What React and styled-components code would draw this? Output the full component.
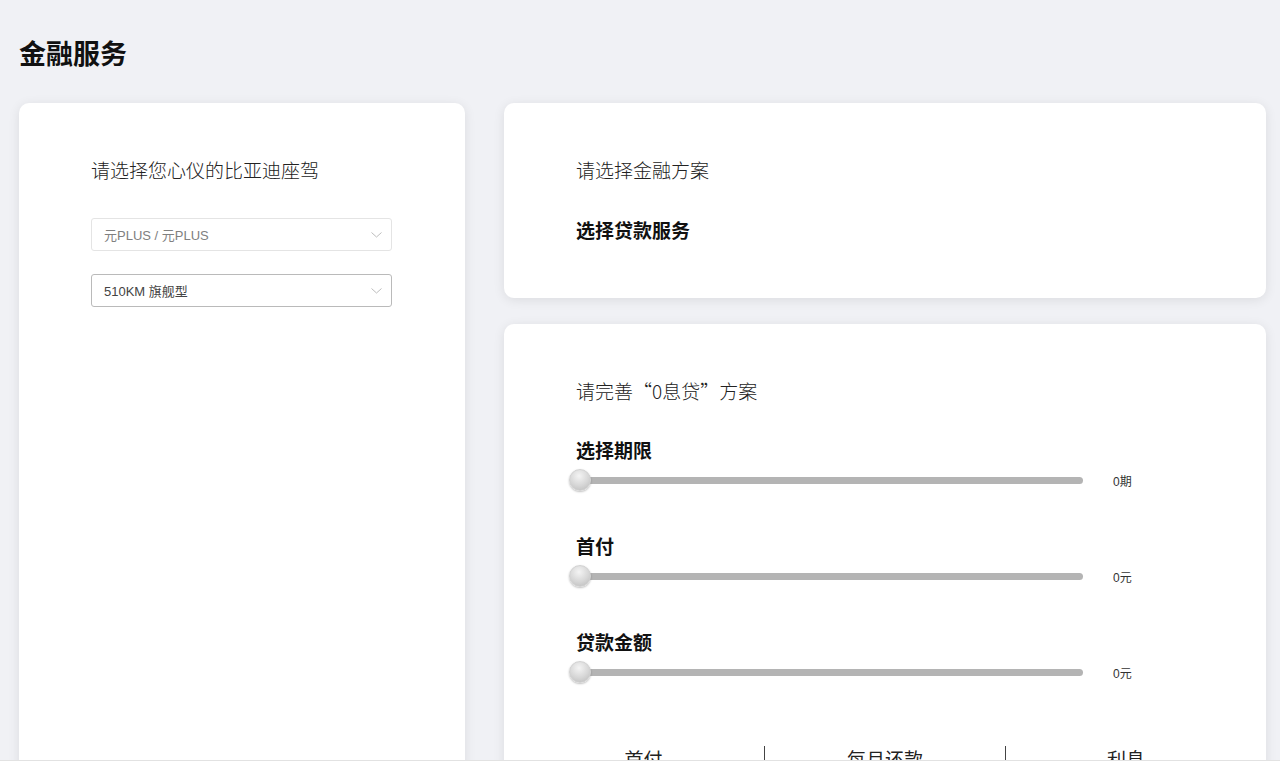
import React from "react";
import styled, { createGlobalStyle } from "styled-components";

const GlobalStyle = createGlobalStyle`
body{
  margin: 0;
  background: #f0f1f5;
  font-family: "Liberation Sans", "Noto Sans CJK SC", sans-serif;
  color: #222;
}
`;

const Page = styled.div`
  padding: 36px 14px 0 19px;
  min-height: 766px;
  box-sizing: border-box;
`;

const PageTitle = styled.h1`
  margin: 0 0 28px;
  font-size: 27px;
  line-height: 39px;
  font-weight: 700;
  color: #111;
`;

const Columns = styled.div`
  display: flex;
  align-items: flex-start;
  gap: 39px;
`;

const Card = styled.div`
  background: #fff;
  border-radius: 10px;
  box-shadow: 0 2px 12px rgba(0, 0, 0, 0.09);
  box-sizing: border-box;
  padding: ${(p) => p.$pad || "56px 72px 54px"};
  min-height: ${(p) => p.$minH || "auto"};
`;

const LeftCard = styled(Card)`
  width: 446px;
  flex-shrink: 0;
`;

const RightCol = styled.div`
  width: 762px;
  display: flex;
  flex-direction: column;
  gap: 26px;
`;

const Prompt = styled.div`
  font-family: "Noto Sans CJK SC", "Liberation Sans", sans-serif;
  font-size: 19px;
  line-height: 21px;
  padding-bottom: 4px;
  font-weight: 300;
  color: #222;
`;

const Label = styled.div`
  font-size: 19px;
  line-height: 25px;
  font-weight: 700;
  color: #111;
  margin-top: ${(p) => p.$mt || 0}px;
`;

const Select = styled.div`
  width: 301px;
  height: 33px;
  box-sizing: border-box;
  border: 1px solid ${(p) => (p.$active ? "#bababa" : "#e4e4e4")};
  border-radius: 3px;
  display: flex;
  align-items: center;
  justify-content: space-between;
  padding: 0 9px 0 12px;
  font-size: 13px;
  color: ${(p) => (p.$active ? "#444" : "#808080")};
  margin-top: ${(p) => p.$mt}px;
`;

const Chevron = () => (
  <svg width="11" height="6" viewBox="0 0 11 6">
    <path d="M0.5 0.5 L5.5 5 L10.5 0.5" fill="none" stroke="#bdbdbd" strokeWidth="1" />
  </svg>
);

const Inner = styled.div`
  padding: 0 53px;
`;

const SliderRow = styled.div`
  display: flex;
  align-items: center;
  height: 22px;
  margin-top: 5px;
  padding-left: 4px;
`;

const Track = styled.div`
  position: relative;
  width: 503px;
  height: 7px;
  border-radius: 4px;
  background: #b4b4b4;
`;

const Thumb = styled.div`
  position: absolute;
  left: -11px;
  top: -8px;
  width: 22px;
  height: 22px;
  border-radius: 50%;
  box-sizing: border-box;
  border: 1px solid #d2d2d2;
  background: radial-gradient(circle at 45% 30%, #f4f4f4 0%, #d6d6d6 55%, #b9b9b9 100%);
  box-shadow: 0 1px 2px rgba(0, 0, 0, 0.25);
`;

const SliderValue = styled.span`
  margin-left: 30px;
  font-size: 12px;
  color: #333;
`;

const Table = styled.div`
  display: grid;
  grid-template-columns: repeat(3, 241px);
  margin-top: 63px;
`;

const HeadCell = styled.div`
  height: 40px;
  padding-top: 2px;
  text-align: center;
  font-family: "Noto Sans CJK SC", "Liberation Sans", sans-serif;
  font-size: 19px;
  line-height: 21px;
  color: #222;
  border-left: ${(p) => (p.$first ? "none" : "1px solid #444")};
`;

const BottomBar = styled.div`
  position: fixed;
  left: 0;
  right: 0;
  bottom: 0;
  height: 5px;
  background: #fff;
  border-top: 1px solid #e2e2e2;
`;

function Slider({ label, value, mt }) {
  return (
    <>
      <Label $mt={mt}>{label}</Label>
      <SliderRow>
        <Track>
          <Thumb />
        </Track>
        <SliderValue>{value}</SliderValue>
      </SliderRow>
    </>
  );
}

export default function App() {
  return (
    <Page>
      <GlobalStyle />
      <PageTitle>金融服务</PageTitle>
      <Columns>
        <LeftCard $minH="700px">
          <Prompt>请选择您心仪的比亚迪座驾</Prompt>
          <Select $mt={34}>
            元PLUS / 元PLUS
            <Chevron />
          </Select>
          <Select $mt={23} $active>
            510KM 旗舰型
            <Chevron />
          </Select>
        </LeftCard>
        <RightCol>
          <Card $pad="56px 72px 54px">
            <Prompt>请选择金融方案</Prompt>
            <Label $mt={35}>选择贷款服务</Label>
          </Card>
          <Card $pad="56px 20px 0 19px" $minH="460px">
            <Inner>
              <Prompt>请完善“0息贷”方案</Prompt>
              <Slider label="选择期限" value="0期" mt={34} />
              <Slider label="首付" value="0元" mt={44} />
              <Slider label="贷款金额" value="0元" mt={44} />
            </Inner>
            <Table>
              <HeadCell $first>首付</HeadCell>
              <HeadCell>每月还款</HeadCell>
              <HeadCell>利息</HeadCell>
            </Table>
          </Card>
        </RightCol>
      </Columns>
      <BottomBar />
    </Page>
  );
}
